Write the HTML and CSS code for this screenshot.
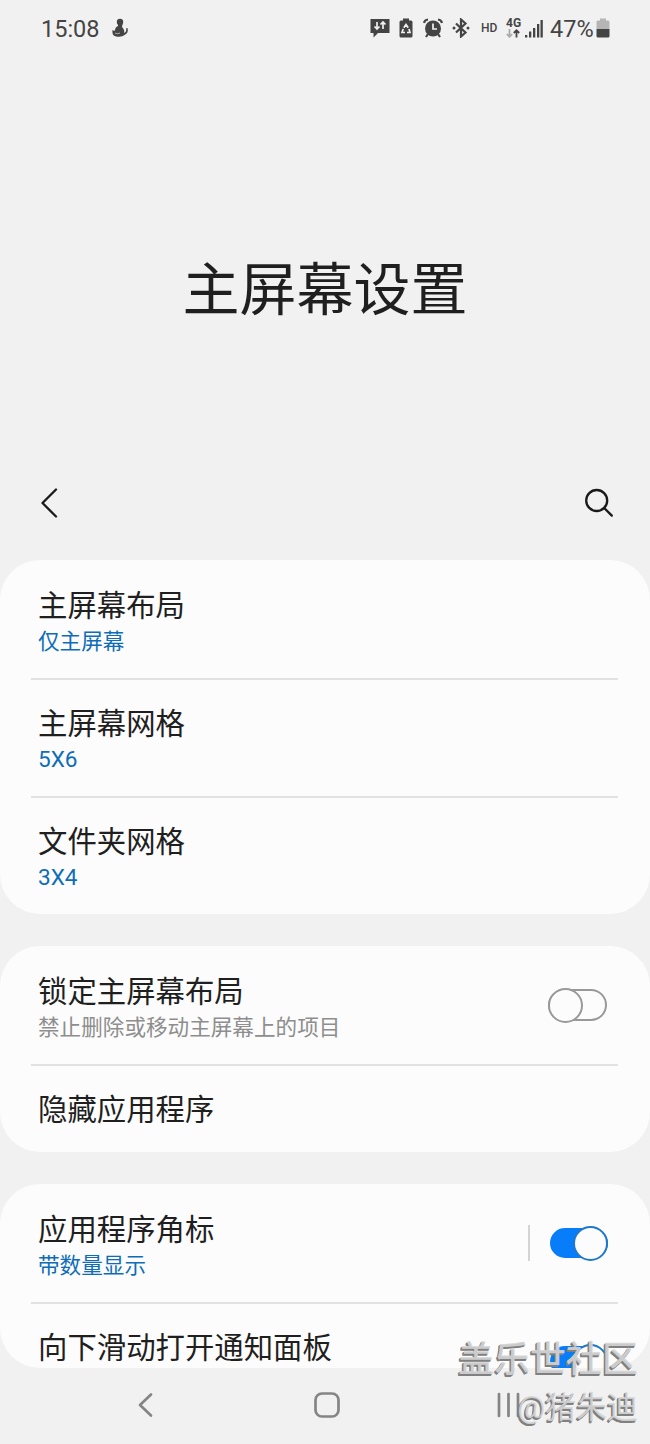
FILE: index.html
```html
<!doctype html>
<html lang="zh-CN">
    <head>
        <title>主屏幕设置</title>
        <meta charset="UTF-8"/>
        <meta name="viewport" content="width=device-width, initial-scale=1"/>
        <link rel="stylesheet" href="styles.css">
    </head>
    <body>
        <div class="screen">
            <div class="status-bar">
                <span class="time">15:08</span>
                <svg class="status-app" width="18" height="20" viewBox="0 0 18 20">
                    <circle cx="9" cy="4" r="3.2"/>
                    <path d="M7 5L11.500 6L11 9Q14 12 13 15Q16 13.500 15 10.500L16.500 10Q18 15 13.500 17Q11 19.500 5 18.500Q.5 17.500 1.500 12Q3 13 4 12.500Q4 9 7 8Z"/>
                    <path class="fold" d="M4 15Q6 16.500 9 15"/>
                </svg>
                <div class="status-icons">
                    <svg class="icon-message" width="20" height="20" viewBox="0 0 20 20">
                        <path d="M.5 1H19.500V15H8L3.500 19.500V15H.5Z"/>
                        <path class="cut" d="M7 4V11M4.500 8.500L7 11L9.500 8.500M13 11V4M10.500 6.500L13 4L15.500 6.500"/>
                    </svg>
                    <svg class="icon-saver" width="14" height="20" viewBox="0 0 14 20">
                        <path d="M4 .5H10V2.500H12Q13.500 2.500 13.500 4V18Q13.500 19.500 12 19.500H2Q.5 19.500 .5 18V4Q.5 2.500 2 2.500H4Z"/>
                        <path class="cut" d="M4.800 9.800L7 6.500L9.200 9.800M10 11L11 14.500H8M6 14.500H3L4.200 11"/>
                    </svg>
                    <svg class="icon-alarm" width="20" height="20" viewBox="0 0 20 20">
                        <circle cx="10" cy="10.500" r="8"/>
                        <path class="line" d="M1 5Q1.500 2 5 1.500M19 5Q18.500 2 15 1.500M5 16L3 19M15 16L17 19"/>
                        <path class="cut" d="M10 5.500V11H14"/>
                    </svg>
                    <svg class="icon-bluetooth" width="18" height="20" viewBox="0 0 18 20">
                        <path class="line" d="M4 5.500L13.500 14.500L9 18.500V1.500L13.500 5.500L4 14.500"/>
                        <circle cx="2" cy="10" r="1.500"/>
                        <circle cx="16" cy="10" r="1.500"/>
                    </svg>
                    <span class="hd">HD</span>
                    <div class="network">
                        <span>4G</span>
                        <svg width="14" height="9" viewBox="0 0 14 9">
                            <path class="down" d="M3.500 0V7.500M.8 5L3.500 7.800L6.200 5"/>
                            <path class="up" d="M10.500 8.500V1.500M7.800 4L10.500 1.300L13.200 4"/>
                        </svg>
                    </div>
                    <svg class="icon-signal" width="18" height="19" viewBox="0 0 18 19">
                        <path d="M0 16H2.300V18.500H0ZM4 12.500H6.300V18.500H4ZM8 9H10.300V18.500H8ZM12 5H14.300V18.500H12ZM15.500 1H17.800V18.500H15.500Z"/>
                    </svg>
                    <span class="percent">47%</span>
                    <svg class="icon-battery" width="14" height="20" viewBox="0 0 14 20">
                        <path class="empty" d="M4 .5H10V2.500H12Q13.500 2.500 13.500 4V11H.5V4Q.5 2.500 2 2.500H4Z"/>
                        <path d="M.5 11H13.500V18Q13.500 19.500 12 19.500H2Q.5 19.500 .5 18Z"/>
                    </svg>
                </div>
            </div>

            <h1>主屏幕设置</h1>

            <div class="toolbar">
                <svg width="18" height="30" viewBox="0 0 18 30">
                    <path d="M16 1.500L2.500 15L16 28.500"/>
                </svg>
                <svg width="30" height="30" viewBox="0 0 30 30">
                    <circle cx="12.700" cy="12.500" r="10.500"/>
                    <path d="M20.200 20L27.800 27.600"/>
                </svg>
            </div>

            <div class="card">
                <div class="row">
                    <div class="row-text">
                        <div class="row-title">主屏幕布局</div>
                        <div class="row-value">仅主屏幕</div>
                    </div>
                </div>
                <div class="row">
                    <div class="row-text">
                        <div class="row-title">主屏幕网格</div>
                        <div class="row-value grid-size">5X6</div>
                    </div>
                </div>
                <div class="row">
                    <div class="row-text">
                        <div class="row-title">文件夹网格</div>
                        <div class="row-value grid-size">3X4</div>
                    </div>
                </div>
            </div>

            <div class="card">
                <div class="row">
                    <div class="row-text">
                        <div class="row-title">锁定主屏幕布局</div>
                        <div class="row-value muted">禁止删除或移动主屏幕上的项目</div>
                    </div>
                    <div class="switch"><div class="knob"></div></div>
                </div>
                <div class="row single">
                    <div class="row-text">
                        <div class="row-title">隐藏应用程序</div>
                    </div>
                </div>
            </div>

            <div class="card">
                <div class="row">
                    <div class="row-text">
                        <div class="row-title">应用程序角标</div>
                        <div class="row-value">带数量显示</div>
                    </div>
                    <div class="separator"></div>
                    <div class="switch on"><div class="knob"></div></div>
                </div>
                <div class="row clipped">
                    <div class="row-text">
                        <div class="row-title">向下滑动打开通知面板</div>
                    </div>
                    <div class="switch on"><div class="knob"></div></div>
                </div>
            </div>

            <div class="nav-bar">
                <svg width="16" height="26" viewBox="0 0 16 26">
                    <path d="M14 2.500L3 13L14 23.500"/>
                </svg>
                <svg class="home" width="26" height="26" viewBox="0 0 26 26">
                    <rect x="1.500" y="1.500" width="23" height="23" rx="6.500"/>
                </svg>
                <svg width="24" height="26" viewBox="0 0 24 26">
                    <path d="M2 2V24M11.500 2V24M21 2V24"/>
                </svg>
            </div>

            <div class="watermark">
                <div class="community">盖乐世社区</div>
                <div class="author">@猪朱迪</div>
            </div>
        </div>
    </body>
</html>
```

FILE: styles.css
```css
body {
    margin: 0;
    background-color: #f1f1f1;
    color: #1f1f1f;
    font-family: Roboto, "Noto Sans CJK SC", sans-serif;
}
svg {
    display: block;
    flex-shrink: 0;
}
.screen {
    position: relative;
    width: 650px;
    height: 1444px;
    overflow: hidden;
}
.status-bar {
    display: flex;
    align-items: center;
    box-sizing: border-box;
    height: 56px;
    padding: 0 40px 0 41px;
    color: #444444;
    fill: #444444;
}
.time {
    font-size: 23.5px;
    line-height: 28px;
    padding-top: 2px;
}
.status-app {
    margin-left: 11px;
}
.status-icons {
    display: flex;
    align-items: center;
    margin-left: auto;
}
.cut {
    fill: none;
    stroke: #f1f1f1;
    stroke-width: 1.7;
}
.fold {
    fill: none;
    stroke: #f1f1f1;
    stroke-width: 0.6;
}
.line {
    fill: none;
    stroke: #444444;
    stroke-width: 2.2;
}
.icon-message {
    margin-right: 9px;
}
.icon-saver {
    margin-right: 10px;
}
.icon-alarm {
    margin-right: 9px;
}
.icon-bluetooth {
    margin-right: 11px;
}
.hd {
    font-size: 12px;
    font-weight: 500;
    width: 25px;
}
.network {
    font-size: 12px;
    font-weight: 700;
    line-height: 11px;
    width: 19px;
}
.network span {
    display: block;
}
.down,
.up {
    fill: none;
    stroke: #444444;
    stroke-width: 1.8;
}
.down {
    stroke: #aaaaaa;
}
.icon-signal {
    margin-right: 7px;
}
.percent {
    font-size: 23.5px;
    line-height: 28px;
    padding-top: 2px;
    width: 46px;
}
.empty {
    fill: #b5b5b5;
}
h1 {
    margin: 0;
    height: 416px;
    padding-top: 6px;
    box-sizing: border-box;
    font-size: 57px;
    font-weight: 400;
    line-height: 458px;
    text-align: center;
}
.toolbar {
    display: flex;
    justify-content: space-between;
    align-items: center;
    box-sizing: border-box;
    height: 88px;
    padding: 0 36px 26px 40px;
    fill: none;
    stroke: #1a1a1a;
    stroke-width: 2.3;
    stroke-linecap: round;
    stroke-linejoin: round;
}
.card {
    overflow: hidden;
    margin-bottom: 32px;
    padding: 2px 32px 0 31px;
    background-color: #fcfcfc;
    border-radius: 40px;
}
.row {
    display: flex;
    box-sizing: border-box;
    height: 118px;
    padding: 26px 11px 0 7px;
    border-bottom: 2px solid #e2e2e2;
}
.row:last-child {
    height: 116px;
    border-bottom: 0;
}
.row.single {
    height: 86px;
}
.row.clipped {
    height: 64px;
}
.row-text {
    flex-grow: 1;
}
.row-title {
    font-size: 29.4px;
    line-height: 36px;
    white-space: nowrap;
}
.row-value {
    font-size: 21.6px;
    line-height: 36px;
    color: #0f6db8;
}
.grid-size {
    font-size: 22.6px;
}
.muted {
    color: #8e8e8e;
}
.switch {
    display: flex;
    align-items: center;
    flex-shrink: 0;
    box-sizing: border-box;
    width: 59px;
    height: 32px;
    margin-top: 15px;
    border: 2px solid #999999;
    border-radius: 16px;
}
.knob {
    box-sizing: border-box;
    flex-shrink: 0;
    width: 35px;
    height: 35px;
    margin-left: -2px;
    background-color: #fcfcfc;
    border: 2px solid #999999;
    border-radius: 50%;
}
.switch.on {
    justify-content: flex-end;
    width: 58px;
    height: 30px;
    margin-top: 16px;
    margin-right: -1px;
    background-color: #087dfa;
    border-color: #087dfa;
}
.on .knob {
    margin-right: -2px;
    border-color: #2078cc;
}
.separator {
    width: 2px;
    height: 36px;
    margin: 13px 20px 0 0;
    background-color: #d4d4d4;
}
.nav-bar {
    display: flex;
    justify-content: space-between;
    box-sizing: border-box;
    margin-top: -8px;
    padding: 0 129px 0 137px;
    fill: none;
    stroke: #858585;
    stroke-width: 2.7;
    stroke-linecap: round;
    stroke-linejoin: round;
}
.home {
    margin-left: 4px;
}
/* Overlaps the last row and the navigation bar */
.watermark {
    position: absolute;
    right: 12px;
    bottom: 12px;
    color: rgba(214, 214, 214, 0.9);
    text-align: right;
    text-shadow: -1px 1px 0 #808080, -1.5px 1.5px 0 #808080;
    white-space: nowrap;
}
.community {
    font-size: 36px;
    font-weight: 500;
    line-height: 48px;
}
.author {
    font-size: 31px;
    line-height: 48px;
}
```
